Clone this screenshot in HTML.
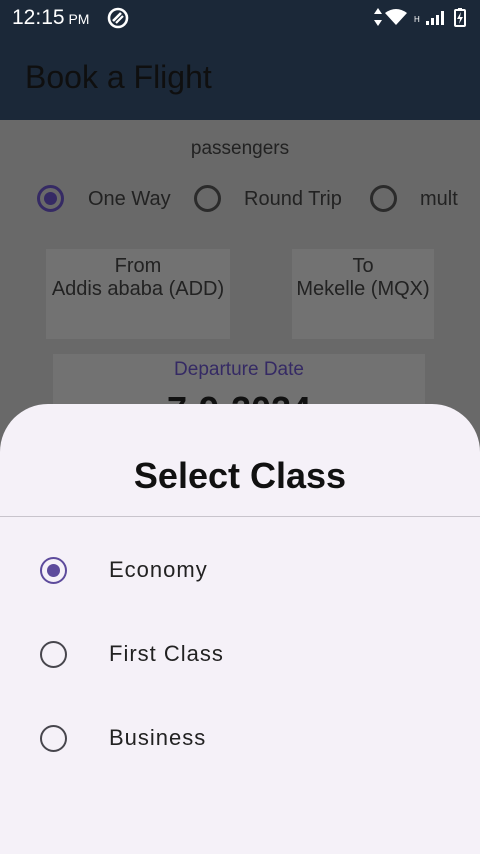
<!DOCTYPE html>
<html><head><meta charset="utf-8"><style>
*{margin:0;padding:0;box-sizing:border-box}
body{width:480px;height:854px;overflow:hidden;position:relative;background:#696969;font-family:"Liberation Sans",Roboto,sans-serif;color:#1e1e1e}
.abs{position:absolute}
.sb{left:0;top:0;width:480px;height:120px;background:#1b2838}
.time{left:12px;top:6px;color:#fff;font-size:21px}
.time small{font-size:14px}
.title{left:25px;top:59px;font-size:32px;color:#0f0f0f}
.c{text-align:center}
.radio{width:27px;height:27px;border-radius:50%;border:3px solid #2b2b2b}
.box{background:#727272}
.t{font-size:20px;color:#222}
.sheet{left:0;top:404px;width:480px;height:450px;background:#f5f1f8;border-radius:48px 48px 0 0}
.r2{width:27px;height:27px;border-radius:50%;border:2.5px solid #47464d}
.lab{font-size:22px;color:#222;letter-spacing:1px}
</style></head><body>
<div class="abs sb"></div>
<div class="abs time">12:15<small> PM</small></div>
<svg class="abs" style="left:106px;top:6px" width="24" height="24" viewBox="0 0 24 24"><circle cx="12" cy="12" r="9" fill="none" stroke="#fff" stroke-width="2.6"/><path d="M7 15 L15 7" stroke="#fff" stroke-width="2.6"/><path d="M10 17 L17 10" stroke="#fff" stroke-width="2.2"/></svg>
<svg class="abs" style="left:372px;top:7px" width="100" height="22" viewBox="0 0 100 22">
<path d="M6 1 L10 7 H2Z M6 19 L10 13 H2Z" fill="#fff"/>
<path d="M13 6 Q24 -2 35 6 L24 18Z" fill="#fff"/>
<text x="42" y="15" font-size="8" fill="#fff" font-family="Liberation Sans">H</text>
<rect x="54" y="14" width="3" height="4" fill="#fff"/><rect x="59" y="11" width="3" height="7" fill="#fff"/><rect x="64" y="8" width="3" height="10" fill="#fff"/><rect x="69" y="4" width="3" height="14" fill="#fff"/>
<rect x="83" y="3" width="10" height="16" rx="1" fill="none" stroke="#fff" stroke-width="2"/><rect x="86" y="1" width="4" height="2" fill="#fff"/><path d="M89 5 L85 12 H88 L87 17 L91 10 H88Z" fill="#fff"/>
</svg>
<div class="abs title">Book a Flight</div>
<div class="abs t c" style="left:0;width:480px;top:138px;font-size:19px">passengers</div>
<div class="abs radio" style="left:37px;top:185px;border-color:#352a64;display:flex;align-items:center;justify-content:center"><div style="width:13px;height:13px;border-radius:50%;background:#352a64"></div></div>
<div class="abs t" style="left:88px;top:188px">One Way</div>
<div class="abs radio" style="left:194px;top:185px"></div>
<div class="abs t" style="left:244px;top:188px">Round Trip</div>
<div class="abs radio" style="left:370px;top:185px"></div>
<div class="abs t" style="left:420px;top:188px">mult</div>
<div class="abs box" style="left:46px;top:249px;width:184px;height:90px"></div>
<div class="abs t c" style="left:46px;width:184px;top:255px">From<br>Addis ababa (ADD)</div>
<div class="abs box" style="left:292px;top:249px;width:142px;height:90px"></div>
<div class="abs t c" style="left:286px;width:154px;top:255px">To<br>Mekelle (MQX)</div>
<div class="abs box" style="left:53px;top:354px;width:372px;height:60px"></div>
<div class="abs c" style="left:53px;width:372px;top:359px;font-size:19px;color:#352a64">Departure Date</div>
<div class="abs c" style="left:53px;width:372px;top:389px;font-size:36px;font-weight:bold;color:#111">7-9-2024</div>
<div class="abs sheet"></div>
<div class="abs c" style="left:0;width:480px;top:455px;font-size:36px;font-weight:bold;color:#111">Select Class</div>
<div class="abs" style="left:0;top:516px;width:480px;height:1px;background:#c8c4cc"></div>
<div class="abs r2" style="left:40px;top:557px;border-color:#5d4b9c;display:flex;align-items:center;justify-content:center"><div style="width:13px;height:13px;border-radius:50%;background:#5d4b9c"></div></div>
<div class="abs lab" style="left:109px;top:557px">Economy</div>
<div class="abs r2" style="left:40px;top:641px"></div>
<div class="abs lab" style="left:109px;top:641px">First Class</div>
<div class="abs r2" style="left:40px;top:725px"></div>
<div class="abs lab" style="left:109px;top:725px">Business</div>
</body></html>
